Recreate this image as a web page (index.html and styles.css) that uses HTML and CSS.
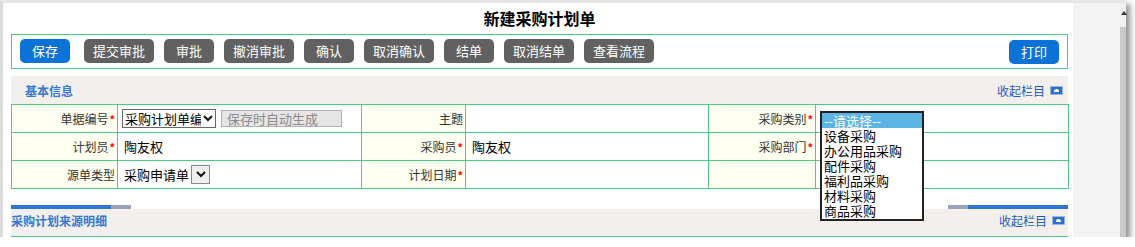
FILE: index.html
```html
<!DOCTYPE html>
<html lang="zh-CN">
<head>
  <meta charset="UTF-8">
  <title>新建采购计划单</title>
  <link rel="stylesheet" href="styles.css">
</head>
<body>
  <div class="window">
    <div class="page">
      <h1 class="title">新建采购计划单</h1>

      <div class="toolbar">
        <button class="btn blue first">保存</button>
        <button class="btn wide">提交审批</button>
        <button class="btn">审批</button>
        <button class="btn wide">撤消审批</button>
        <button class="btn">确认</button>
        <button class="btn wide">取消确认</button>
        <button class="btn">结单</button>
        <button class="btn wide">取消结单</button>
        <button class="btn wide">查看流程</button>
        <button class="btn blue print">打印</button>
      </div>

      <div class="sec-head">
        <span class="sec-title">基本信息</span>
        <a class="collapse">收起栏目 <i class="ico"></i></a>
      </div>

      <table class="form">
        <colgroup>
          <col class="c-l1">
          <col class="c-v1">
          <col class="c-l2">
          <col class="c-v2">
          <col class="c-l3">
          <col class="c-v3">
        </colgroup>
        <tr>
          <td class="lbl">单据编号<b class="req">*</b></td>
          <td class="val">
            <div class="field">
              <span class="sel"><span class="sel-text">采购计划单编号</span><span class="arrow"><svg width="10" height="7" viewBox="0 0 10 7"><path d="M1 1 L5 5 L9 1" fill="none" stroke="#111" stroke-width="2"/></svg></span></span>
              <span class="ro">保存时自动生成</span>
            </div>
          </td>
          <td class="lbl">主题</td>
          <td class="val"></td>
          <td class="lbl">采购类别<b class="req">*</b></td>
          <td class="val">
            <div class="anchor">
              <ul class="dd">
                <li class="on">--请选择--</li>
                <li>设备采购</li>
                <li>办公用品采购</li>
                <li>配件采购</li>
                <li>福利品采购</li>
                <li>材料采购</li>
                <li>商品采购</li>
              </ul>
            </div>
          </td>
        </tr>
        <tr>
          <td class="lbl">计划员<b class="req">*</b></td>
          <td class="val"><span class="txt">陶友权</span></td>
          <td class="lbl">采购员<b class="req">*</b></td>
          <td class="val"><span class="txt">陶友权</span></td>
          <td class="lbl">采购部门<b class="req">*</b></td>
          <td class="val"></td>
        </tr>
        <tr>
          <td class="lbl">源单类型</td>
          <td class="val">
            <div class="field">
              <span class="txt">采购申请单</span>
              <span class="mini"><svg width="10" height="7" viewBox="0 0 10 7"><path d="M1 1 L5 5 L9 1" fill="none" stroke="#111" stroke-width="2"/></svg></span>
            </div>
          </td>
          <td class="lbl">计划日期<b class="req">*</b></td>
          <td class="val"></td>
          <td class="lbl"></td>
          <td class="val"></td>
        </tr>
      </table>

      <div class="tabs">
        <span class="tab-l"></span>
        <span class="tab-r"></span>
      </div>
      <div class="sec-head second">
        <span class="sec-title">采购计划来源明细</span>
        <a class="collapse">收起栏目 <i class="ico"></i></a>
      </div>
    </div>
    <div class="side"></div>
    <div class="scroll"><span class="up"></span></div>
  </div>
</body>
</html>
```

FILE: styles.css
```css
html, body { margin: 0; padding: 0; background: #fff; overflow: hidden; }
body { font-family: "Noto Sans CJK SC", "Liberation Sans", sans-serif; font-size: 12px; color: #333; }

.window { display: flex; width: 1123px; height: 234px; border-left: 3px solid #dcdcdc; border-top: 3px solid #e6e6e6; background: #fff; box-shadow: 4px 4px 6px rgba(0,0,0,0.45); }
.page { width: 1057px; padding: 0 5px 0 8px; }
.side { width: 47px; background: #f3f3f3; }
.scroll { width: 6px; background: #c9c9c9; position: relative; }
.scroll .up { position: absolute; left: 0; top: 0; width: 6px; height: 24px; background: #f0f0f0; }
.scroll .up::after { content: ""; position: absolute; left: 1px; top: 8px; border: 3px solid transparent; border-bottom: 4px solid #333; border-top: 0; }

.title { margin: 0; height: 31px; line-height: 31px; text-align: center; font-size: 16px; font-weight: bold; color: #000; }

.toolbar { display: flex; gap: 10px; height: 24px; padding: 4px 8px 5px 8px; border: 1px solid #4fc884; }
.btn { width: 50px; height: 24px; padding: 0; border: none; border-radius: 5px; background: #616161; color: #fff; font-family: inherit; font-size: 13px; line-height: 24px; cursor: pointer; }
.btn.wide { width: 70px; }
.btn.blue { background: #0b73d8; }
.btn.first { margin-right: 4px; }
.btn.print { margin-left: auto; margin-top: 1px; }

.sec-head { display: flex; justify-content: space-between; align-items: center; height: 28px; margin-top: 7px; padding: 0 5px 0 14px; background: #f2efec; }
.sec-title { font-size: 12px; font-weight: bold; color: #3577d2; }
.collapse { display: flex; align-items: center; gap: 5px; color: #1d5cc2; font-size: 12px; text-decoration: none; }
.ico { position: relative; width: 11px; height: 7px; background: #2f6fd0; border: 1px solid #9ab8e6; }
.ico::after { content: ""; position: absolute; left: 3px; top: 2px; width: 5px; height: 3px; background: #fff; border-radius: 3px 3px 0 0; }

.form { width: 1057px; table-layout: fixed; border-collapse: collapse; }
.c-l1 { width: 106px; }
.c-v1 { width: 244px; }
.c-l2 { width: 104px; }
.c-v2 { width: 243px; }
.c-l3 { width: 107px; }
.c-v3 { width: 253px; }
.form td { height: 27px; padding: 0; border: 1px solid #4fc884; vertical-align: middle; }
.form .lbl { background: #fefff0; text-align: right; padding-right: 2px; color: #333; }
.form .val { background: #fff; padding-left: 4px; }
.req { color: #f00; font-weight: bold; font-size: 11px; margin-left: 1px; }
.txt { font-size: 13px; color: #000; padding-left: 2px; }

.field { display: flex; align-items: center; gap: 5px; }
.sel { display: flex; width: 92px; height: 17px; border: 1px solid #666; background: #fff; overflow: hidden; }
.sel-text { flex: 1; overflow: hidden; white-space: nowrap; font-size: 13px; line-height: 17px; color: #000; padding-left: 2px; }
.sel .arrow { width: 14px; display: flex; align-items: center; justify-content: center; background: #fff; }
.ro { width: 114px; height: 15px; line-height: 15px; padding-left: 5px; border: 1px solid #b0b0b0; background: #e5e5e5; color: #8a8a8a; font-size: 13px; }
.mini { display: flex; align-items: center; justify-content: center; width: 17px; height: 17px; margin-left: -3px; border: 1px solid #8a8a8a; background: #efefef; }

.anchor { position: relative; height: 27px; }
.dd { position: absolute; left: 0; top: 6px; z-index: 5; width: 100px; margin: 0; padding: 0 0 1px 0; list-style: none; border: 2px solid #222; background: #fff; }
.dd li { height: 15px; line-height: 15px; padding-left: 2px; font-size: 13px; color: #000; white-space: nowrap; }
.dd li.on { background: #5cb4e4; color: #fff; }

.tabs { display: flex; justify-content: space-between; height: 4px; margin-top: 16px; }
.tab-l { width: 120px; background: linear-gradient(to right, #2f74d0 100px, #9aa3b8 100px); }
.tab-r { width: 120px; background: linear-gradient(to right, #9aa3b8 20px, #2f74d0 20px); }

.sec-head.second { margin-top: 0; align-items: flex-start; padding: 3px 3px 0 0; height: 24px; border-bottom: 1px solid #4fc884; }
```
